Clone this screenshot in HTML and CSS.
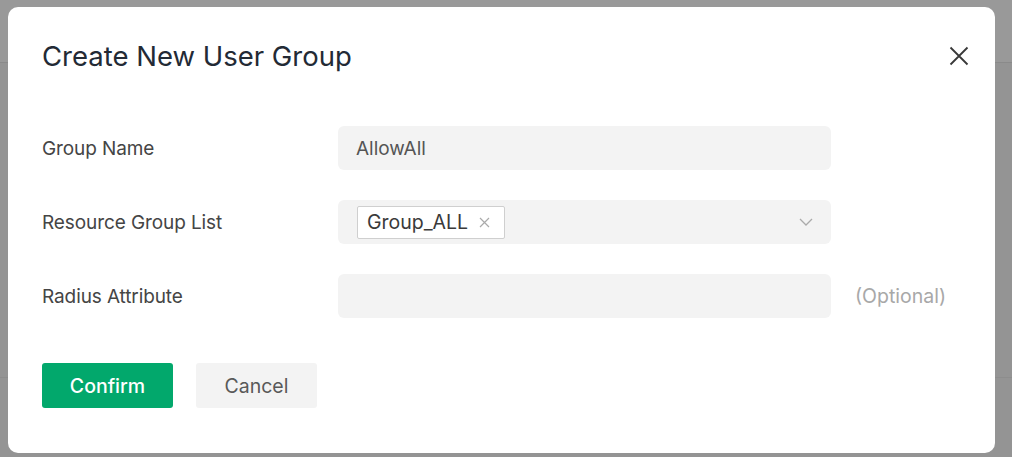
FILE: index.html
```html
<!DOCTYPE html>
<html>
<head>
<meta charset="utf-8">
<link rel="stylesheet" href="styles.css">
</head>
<body>
<div class="page">
  <div class="page-header"></div>
  <div class="page-body"></div>
  <div class="page-foot"></div>
</div>
<div class="modal">
  <div class="modal-head">
    <h1 class="modal-title">Create New User Group</h1>
    <button class="close" aria-label="Close">
      <svg width="20" height="20" viewBox="0 0 20 20"><path d="M1.5 1.5 L18.5 18.5 M18.5 1.5 L1.5 18.5" stroke="#383838" stroke-width="1.8" fill="none"/></svg>
    </button>
  </div>
  <div class="form">
    <div class="row">
      <label class="label">Group Name</label>
      <div class="field"><span class="value">AllowAll</span></div>
    </div>
    <div class="row">
      <label class="label">Resource Group List</label>
      <div class="field select">
        <span class="tag">Group_ALL<svg class="tag-x" width="11" height="11" viewBox="0 0 11 11"><path d="M1 1 L10 10 M10 1 L1 10" stroke="#aaa" stroke-width="1.2" fill="none"/></svg></span>
        <svg class="chev" width="14" height="8" viewBox="0 0 14 8"><path d="M1 1 L7 7 L13 1" stroke="#aaa" stroke-width="1.3" fill="none"/></svg>
      </div>
    </div>
    <div class="row">
      <label class="label">Radius Attribute</label>
      <div class="field"></div>
      <span class="hint">(Optional)</span>
    </div>
  </div>
  <div class="actions">
    <button class="btn primary">Confirm</button>
    <button class="btn secondary">Cancel</button>
  </div>
</div>
</body>
</html>
```
FILE: styles.css
```css
* { box-sizing: border-box; }
html, body { margin: 0; padding: 0; }
body {
  width: 1012px;
  height: 457px;
  overflow: hidden;
  background: #949494;
  font-family: Inter, "Noto Sans", sans-serif;
  position: relative;
}
.page { display: flex; flex-direction: column; height: 457px; }
.page-header { height: 63px; background: #999999; border-bottom: 1px solid #8a8a8a; }
.page-body { height: 315px; border-bottom: 1px solid #8d8d8d; }
.page-foot { flex: 1; }
.modal {
  position: absolute;
  left: 8px;
  top: 7px;
  width: 987px;
  height: 446px;
  background: #fff;
  border-radius: 10px;
  padding: 0 34px;
}
.modal-head {
  display: flex;
  align-items: center;
  justify-content: space-between;
  padding-top: 30px;
  height: 68px;
}
.modal-title {
  margin: 0;
  font-size: 27.5px;
  line-height: 38px;
  font-weight: 400;
  color: #232a35;
  letter-spacing: 0;
}
.close {
  border: 0;
  background: none;
  padding: 0;
  margin-right: -8px;
  width: 20px;
  height: 20px;
  display: flex;
}
.form {
  margin-top: 51px;
  display: flex;
  flex-direction: column;
  gap: 30px;
}
.row { display: flex; align-items: center; height: 44px; }
.label {
  width: 296px;
  font-size: 19px;
  color: #454545;
  letter-spacing: -0.1px;
}
.field {
  width: 493px;
  height: 44px;
  background: #f3f3f3;
  border-radius: 6px;
  display: flex;
  align-items: center;
  padding: 0 18px;
}
.value { font-size: 19px; color: #555; letter-spacing: 0; }
.select { padding: 0 18px 0 19px; justify-content: space-between; }
.tag {
  display: flex;
  align-items: center;
  gap: 11px;
  height: 33px;
  padding: 0 14px 0 9px;
  background: #fff;
  border: 1px solid #cfcfcf;
  border-radius: 2px;
  font-size: 19.5px;
  color: #3a3a3a;
  letter-spacing: 0;
}
.hint {
  margin-left: 24px;
  font-size: 19.5px;
  color: #a8a8a8;
  letter-spacing: 0;
}
.actions {
  margin-top: 45px;
  display: flex;
  gap: 23px;
}
.btn {
  height: 45px;
  border: 0;
  border-radius: 3px;
  font-family: Inter, "Noto Sans", sans-serif;
  font-size: 19.5px;
}
.primary { width: 131px; background: #02a86c; color: #fff; font-weight: 500; }
.secondary { width: 121px; background: #f3f3f3; color: #595959; }
```
